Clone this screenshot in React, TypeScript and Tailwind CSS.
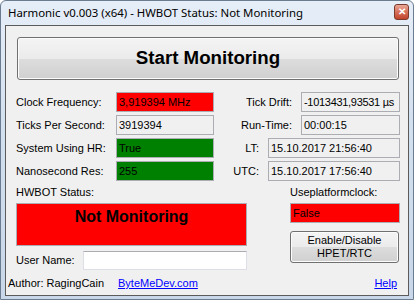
import React from 'react';

const field = 'h-[20px] border border-[#abadb3] px-[2px] flex items-center text-[11px] leading-none whitespace-nowrap overflow-hidden';
const label = 'text-[11px] leading-none text-black whitespace-nowrap';

function Row({
  left,
  leftValue,
  leftBg,
  right,
  rightValue,
  rightWidth,
  tight,
}: {
  left: string;
  leftValue: string;
  leftBg: string;
  right: string;
  rightValue: string;
  rightWidth: string;
  tight?: boolean;
}) {
  return (
    <div className="flex items-center justify-between">
      <div className="flex items-center">
        <span className={`${label} w-[100px]`}>{left}</span>
        <div className={`${field} w-[98px] ${leftBg}`}>{leftValue}</div>
      </div>
      <div className="flex items-center gap-[9px]">
        <span className={label}>{right}</span>
        <div className={`${field} ${rightWidth} bg-[#f0f0f0] ${tight ? 'tracking-[-0.3px]' : ''}`}>{rightValue}</div>
      </div>
    </div>
  );
}

export default function App() {
  return (
    <div
      className="w-[414px] h-[300px] flex flex-col border border-[#6b7c90] rounded-t-[6px] bg-[linear-gradient(to_bottom,#e6eef8_0%,#d3e0ef_40%,#c8d7e9_100%)] overflow-hidden"
      style={{ fontFamily: '"Liberation Sans", Arial, sans-serif' }}
    >
      {/* Title bar */}
      <div className="h-[24px] flex items-center justify-between pl-[7px] pr-[4px] shrink-0">
        <span
          className="text-[11.4px] text-black whitespace-nowrap"
          style={{ fontFamily: '"Noto Sans", "Open Sans", sans-serif' }}
        >
          Harmonic v0.003 (x64) - HWBOT Status: Not Monitoring
        </span>
        <div className="w-[15px] h-[16px] -mt-[2px] rounded-[3px] border border-[#7a3a2c] bg-[linear-gradient(to_bottom,#eaa898_0%,#d6705a_50%,#c1432b_100%)] flex items-center justify-center text-white text-[10px] font-bold leading-none">
          ✕
        </div>
      </div>

      {/* Client area */}
      <div className="flex-1 mx-[4px] mb-[3px] border border-[#5b5b5b] bg-[#f0f0f0] flex flex-col">
        <button className="mt-[11px] ml-[11px] mr-[9px] h-[43px] rounded-[3px] border border-[#707070] bg-[linear-gradient(to_bottom,#f4f4f4_0%,#ebebeb_50%,#dddddd_50%,#d0d0d0_100%)] shadow-[inset_0_0_0_1px_#fcfcfc] text-[18.7px] font-bold text-black">
          Start Monitoring
        </button>

        <div className="mt-[12px] pl-[10px] pr-[8px] flex flex-col gap-[3px]">
          <Row
            left="Clock Frequency:"
            leftValue="3,919394 MHz"
            leftBg="bg-[#ff0000]"
            right="Tick Drift:"
            rightValue="-1013431,93531 µs"
            rightWidth="w-[99px]"
            tight
          />
          <Row
            left="Ticks Per Second:"
            leftValue="3919394"
            leftBg="bg-[#f0f0f0]"
            right="Run-Time:"
            rightValue="00:00:15"
            rightWidth="w-[99px]"
          />
          <Row
            left="System Using HR:"
            leftValue="True"
            leftBg="bg-[#008000]"
            right="LT:"
            rightValue="15.10.2017 21:56:40"
            rightWidth="w-[132px]"
          />
          <Row
            left="Nanosecond Res:"
            leftValue="255"
            leftBg="bg-[#008000]"
            right="UTC:"
            rightValue="15.10.2017 17:56:40"
            rightWidth="w-[132px]"
          />
        </div>

        <div className="mt-[6px] pl-[10px] pr-[8px] flex justify-between">
          <div className="flex flex-col w-[231px]">
            <span className={`${label} h-[13px] leading-[13px]`}>HWBOT Status:</span>
            <div className="mt-[3px] h-[43px] border border-[#abadb3] bg-[#ff0000] flex justify-center pt-[5px]">
              <span className="text-[16px] font-bold text-black leading-none">Not Monitoring</span>
            </div>
            <div className="mt-[5px] flex items-center">
              <span className={`${label} w-[67px]`}>User Name:</span>
              <div className="flex-1 h-[19px] border border-[#dcdfe6] border-t-[#abadb3] bg-white" />
            </div>
          </div>
          <div className="flex flex-col w-[110px]">
            <span className={`${label} h-[13px] leading-[13px]`}>Useplatformclock:</span>
            <div className={`mt-[3px] ${field} h-[19px] bg-[#ff0000]`}>False</div>
            <button className="mt-[8px] mr-[1px] h-[32px] rounded-[3px] border border-[#707070] bg-[linear-gradient(to_bottom,#f4f4f4_0%,#ebebeb_50%,#dddddd_50%,#d0d0d0_100%)] shadow-[inset_0_0_0_1px_#fcfcfc] text-[11px] leading-[13px] text-black">
              Enable/Disable
              <br />
              HPET/RTC
            </button>
          </div>
        </div>

        <div className="mt-auto mb-[5px] pl-[2px] pr-[11px] flex items-center text-[11px] leading-[14px]">
          <span className="text-black">Author: RagingCain</span>
          <a className="ml-[14px] text-[#0000ff] underline">ByteMeDev.com</a>
          <a className="ml-auto text-[#0000ff] underline">Help</a>
        </div>
      </div>
    </div>
  );
}
